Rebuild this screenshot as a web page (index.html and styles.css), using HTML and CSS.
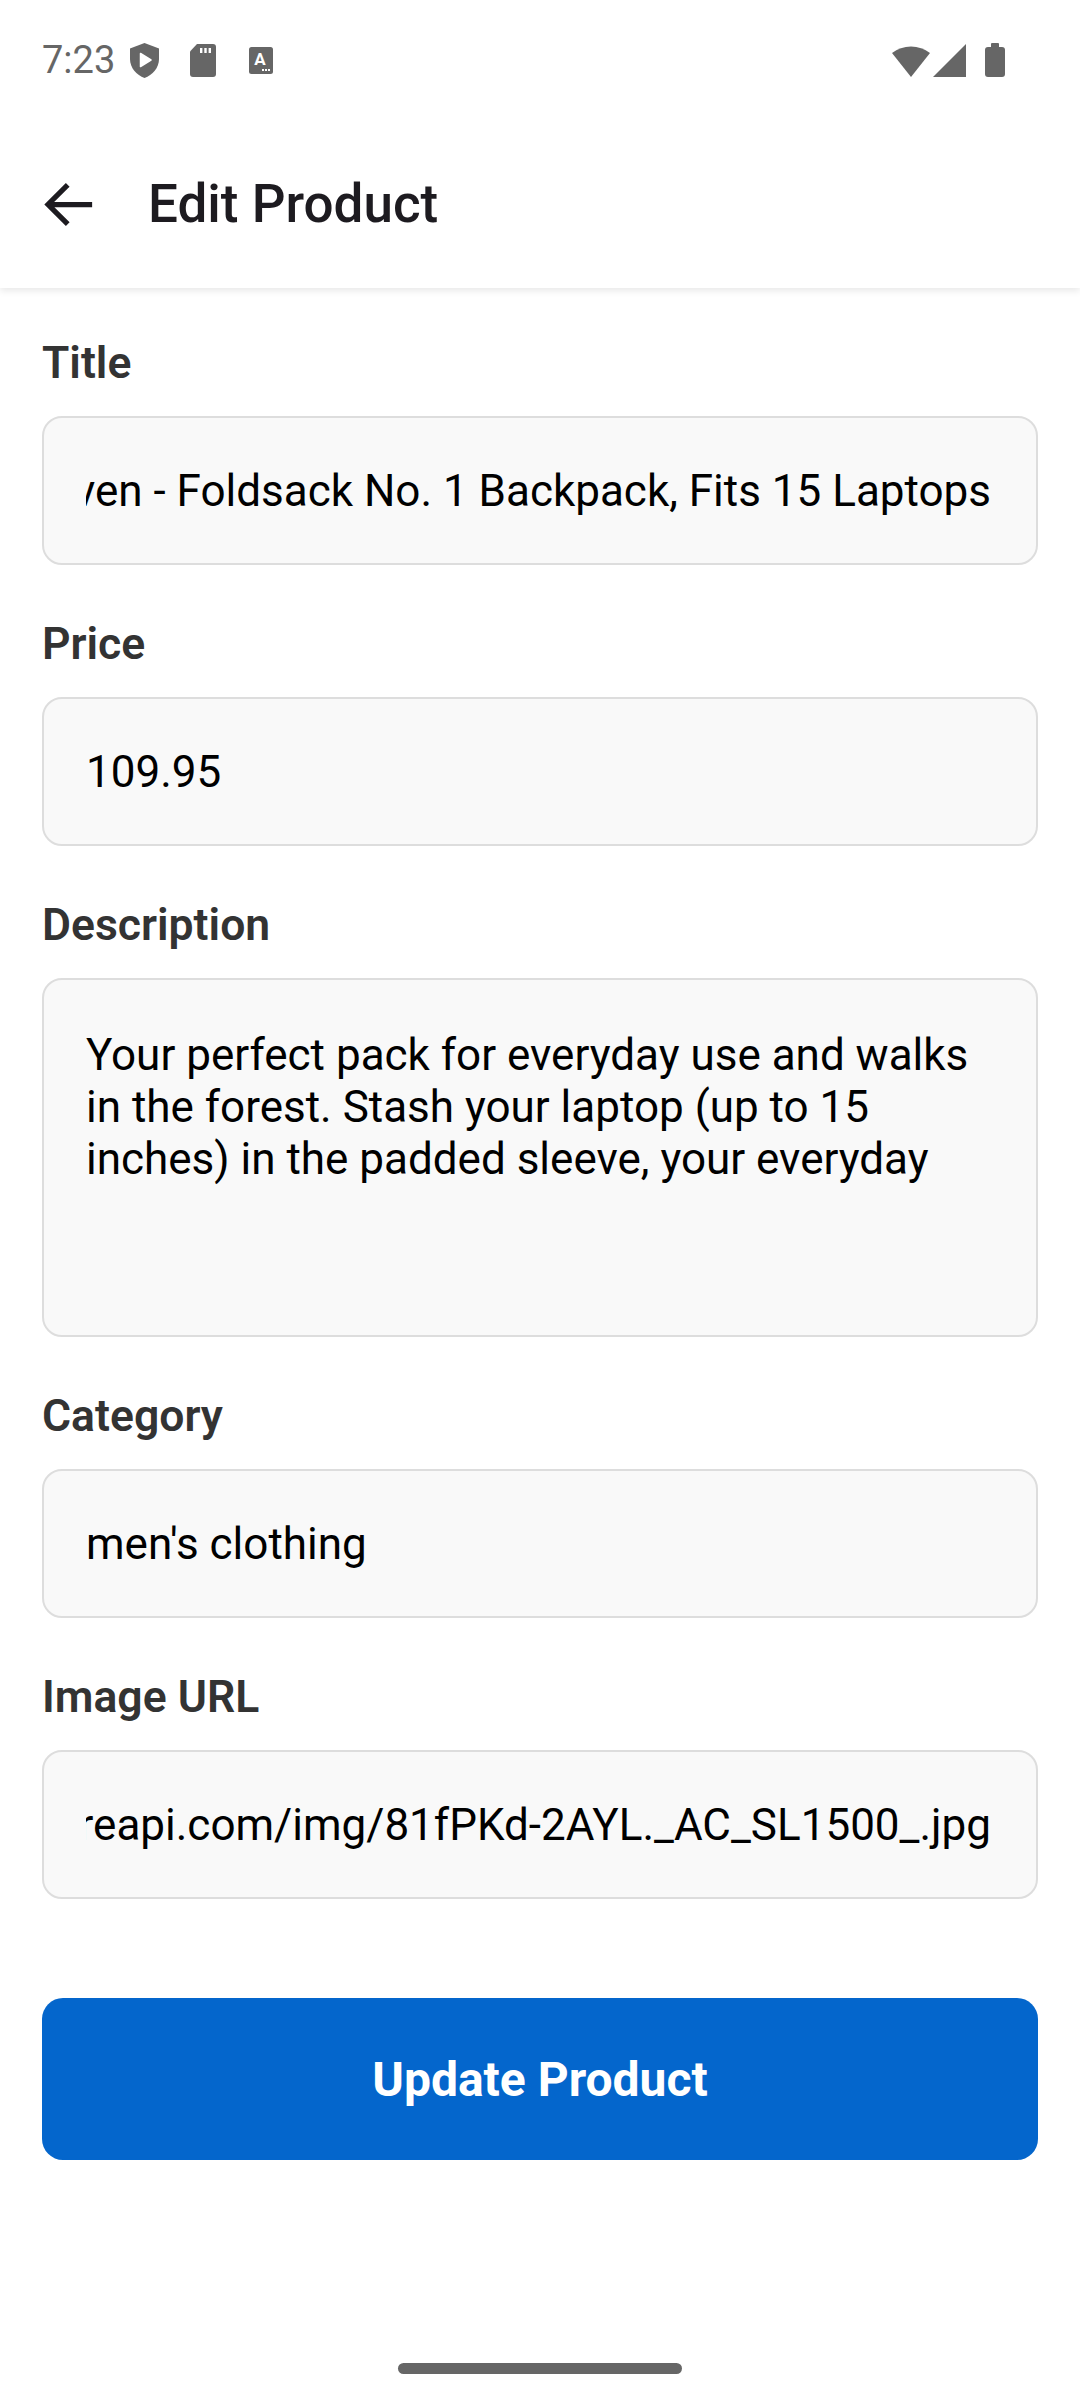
FILE: index.html
```html
<!DOCTYPE html>
<html lang="en">
<head>
<meta charset="utf-8">
<title>Edit Product</title>
<link rel="stylesheet" href="styles.css">
</head>
<body>
<div class="screen">
  <header class="topbar">
    <div class="status">
      <span class="time">7:23</span>
      <svg class="ic-shield" width="29" height="35" viewBox="0 0 29 35"><path d="M14.5 0 L29 5.5 V16 C29 25 22.5 32 14.5 35 C6.5 32 0 25 0 16 V5.5 Z" fill="#666"/><path d="M10.5 10.5 L21 17 L10.5 23.5 Z" fill="#fff" stroke="#fff" stroke-width="1.5" stroke-linejoin="round"/></svg>
      <svg class="ic-sd" width="26" height="33" viewBox="0 0 26 33"><path d="M7 0 H23 A3 3 0 0 1 26 3 V30 A3 3 0 0 1 23 33 H3 A3 3 0 0 1 0 30 V7.5 Z" fill="#666"/><rect x="10" y="4" width="2.4" height="5" fill="#fff"/><rect x="14.3" y="4" width="2.4" height="5" fill="#fff"/><rect x="18.6" y="4" width="2.4" height="5" fill="#fff"/></svg>
      <svg class="ic-a" width="24" height="27" viewBox="0 0 24 27"><rect x="0" y="0" width="24" height="27" rx="2.5" fill="#666"/><text x="11" y="18" text-anchor="middle" font-family="Roboto, sans-serif" font-weight="700" font-size="17" fill="#fff">A</text><rect x="13" y="22" width="2" height="2" fill="#fff"/><rect x="16" y="22" width="2" height="2" fill="#fff"/><rect x="19" y="22" width="2" height="2" fill="#fff"/></svg>
      <span class="spacer"></span>
      <svg class="ic-wifi" width="38" height="33" viewBox="0 0 38 33"><path d="M19 33 L0 9 A31 31 0 0 1 38 9 Z" fill="#666"/></svg>
      <svg class="ic-signal" width="33" height="33" viewBox="0 0 33 33"><path d="M33 0 V33 H0 Z" fill="#666"/></svg>
      <svg class="ic-battery" width="20" height="34" viewBox="0 0 20 34"><rect x="6" y="0" width="8" height="5" rx="1" fill="#666"/><rect x="0" y="4" width="20" height="30" rx="3" fill="#666"/></svg>
    </div>
    <div class="appbar">
      <svg class="back" width="63" height="63" viewBox="0 0 24 24"><path d="M20 12 H4.8 M11 5.2 L4.2 12 L11 18.8" fill="none" stroke="#1d1b20" stroke-width="2" stroke-linecap="square"/></svg>
      <h1 class="appbar-title">Edit Product</h1>
    </div>
  </header>

  <main class="form">
    <div class="field">
      <div class="label">Title</div>
      <div class="input"><div class="clip clip-end"><span class="value">Fjallraven - Foldsack No. 1 Backpack, Fits 15 Laptops</span></div></div>
    </div>
    <div class="field">
      <div class="label">Price</div>
      <div class="input"><div class="clip"><span class="value">109.95</span></div></div>
    </div>
    <div class="field">
      <div class="label">Description</div>
      <div class="input input-multi"><div class="multi-text">Your perfect pack for everyday use and walks<br>in the forest. Stash your laptop (up to 15<br>inches) in the padded sleeve, your everyday</div></div>
    </div>
    <div class="field">
      <div class="label">Category</div>
      <div class="input"><div class="clip"><span class="value">men's clothing</span></div></div>
    </div>
    <div class="field">
      <div class="label">Image URL</div>
      <div class="input"><div class="clip clip-end"><span class="value">https://fakestoreapi.com/img/81fPKd-2AYL._AC_SL1500_.jpg</span></div></div>
    </div>
    <button class="submit" type="button">Update Product</button>
  </main>

  <div class="home-bar"></div>
</div>
</body>
</html>
```

FILE: styles.css
```css
* { box-sizing: border-box; }

html, body {
  margin: 0;
  padding: 0;
  background: #ffffff;
}

body {
  font-family: Roboto, "Noto Sans", "Liberation Sans", sans-serif;
  width: 1080px;
  height: 2400px;
  overflow: hidden;
}

.screen {
  width: 1080px;
  min-height: 2400px;
  display: flex;
  flex-direction: column;
  background: #ffffff;
}

.topbar {
  background: #ffffff;
  box-shadow: 0 3px 7px rgba(0, 0, 0, 0.09);
  position: relative;
  z-index: 1;
}

.status {
  height: 120px;
  display: flex;
  align-items: center;
  padding: 0 75px 0 42px;
}

.time {
  font-size: 38px;
  color: #666666;
  line-height: 1;
}

.ic-shield { margin-left: 15px; }
.ic-sd { margin-left: 31px; }
.ic-a { margin-left: 33px; }
.spacer { flex: 1; }
.ic-signal { margin-left: 3px; }
.ic-battery { margin-left: 19px; }

.appbar {
  height: 168px;
  display: flex;
  align-items: center;
  padding-left: 37px;
}

.back { flex: none; }

.appbar-title {
  margin: 0 0 0 48px;
  font-size: 53px;
  font-weight: 500;
  color: #1d1b20;
  letter-spacing: 0;
}

.form {
  padding: 49px 42px 0 42px;
  display: flex;
  flex-direction: column;
}

.field {
  margin-bottom: 53px;
}

.label {
  font-size: 44.5px;
  line-height: 53px;
  font-weight: 600;
  color: #333333;
  margin-bottom: 26px;
}

.input {
  height: 149px;
  border: 2px solid #dddddd;
  border-radius: 20px;
  background: #f9f9f9;
  padding: 0 45px 0 42px;
  display: flex;
  align-items: center;
}

.clip {
  flex: 1;
  min-width: 0;
  overflow: hidden;
  display: flex;
  white-space: nowrap;
}

.clip-end { justify-content: flex-end; }

.value {
  flex: none;
  font-size: 44px;
  line-height: 52px;
  color: #000000;
}

.input-multi {
  height: 359px;
  align-items: flex-start;
  padding-top: 49px;
}

.multi-text {
  font-size: 44px;
  line-height: 52px;
  color: #000000;
  white-space: nowrap;
}

.submit {
  margin-top: 46px;
  height: 162px;
  width: 100%;
  border: none;
  border-radius: 21px;
  background: #0466cc;
  color: #ffffff;
  font-family: Roboto, "Noto Sans", "Liberation Sans", sans-serif;
  font-size: 48px;
  font-weight: 700;
  display: flex;
  align-items: center;
  justify-content: center;
}

.home-bar {
  margin: auto auto 26px auto;
  width: 284px;
  height: 11px;
  border-radius: 6px;
  background: #666666;
}
```
